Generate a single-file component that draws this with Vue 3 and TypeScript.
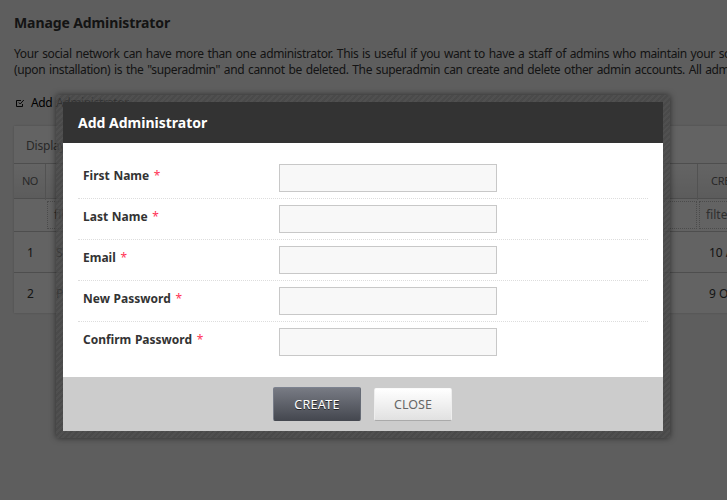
<script setup lang="ts">
interface Field {
  id: string
  label: string
  type: string
}

interface AdminRow {
  no: number
  name: string
  created: string
}

const fields: Field[] = [
  { id: 'first-name', label: 'First Name', type: 'text' },
  { id: 'last-name', label: 'Last Name', type: 'text' },
  { id: 'email', label: 'Email', type: 'text' },
  { id: 'new-password', label: 'New Password', type: 'password' },
  { id: 'confirm-password', label: 'Confirm Password', type: 'password' },
]

const rows: AdminRow[] = [
  { no: 1, name: 'S', created: '10 A' },
  { no: 2, name: 'P', created: '9 O' },
]
</script>

<template>
  <div class="screen">
    <main class="page">
      <h1>Manage Administrator</h1>
      <div class="intro">
        <p>Your social network can have more than one administrator. This is useful if you want to have a staff of admins who maintain your so</p>
        <p>(upon installation) is the "superadmin" and cannot be deleted. The superadmin can create and delete other admin accounts. All adm</p>
      </div>
      <a class="add-link">
        <svg width="9" height="9" viewBox="0 0 9 9" aria-hidden="true">
          <path d="M5 1.5H.5v6h6V5M2.8 3.5l1.4 1.5L7.8 1" />
        </svg>
        <span>Add Administrator</span>
      </a>
      <section class="grid">
        <div class="summary">Display</div>
        <div class="row head">
          <div class="cell no">NO</div>
          <div class="cell name"></div>
          <div class="cell created">CRE</div>
        </div>
        <div class="row filters">
          <div class="cell no"></div>
          <div class="cell name"><span class="filter">filter</span></div>
          <div class="cell created"><span class="filter">filter</span></div>
        </div>
        <div v-for="row in rows" :key="row.no" class="row">
          <div class="cell no">{{ row.no }}</div>
          <div class="cell name">{{ row.name }}</div>
          <div class="cell created">{{ row.created }}</div>
        </div>
      </section>
    </main>
    <div class="overlay">
      <div class="frame">
        <form class="dialog" @submit.prevent>
          <header>Add Administrator</header>
          <div class="fields">
            <div v-for="field in fields" :key="field.id" class="field">
              <label :for="field.id">{{ field.label }} <span class="required">*</span></label>
              <input :id="field.id" :type="field.type" />
            </div>
          </div>
          <footer>
            <button class="create" type="submit">CREATE</button>
            <button class="close" type="button">CLOSE</button>
          </footer>
        </form>
      </div>
    </div>
  </div>
</template>

<style>
body {
  overflow: hidden;
}
</style>

<style scoped>
* {
  box-sizing: border-box;
}

.screen {
  position: relative;
  width: 727px;
  height: 500px;
  overflow: hidden;
  background: #ebebeb;
  color: #333;
  font: 12px/16px Tahoma, "Noto Sans", sans-serif;
}

.page {
  padding: 14px 0 0 14px;
}

h1 {
  margin: 0;
  font-size: 14px;
  line-height: 18px;
  letter-spacing: -0.1px;
}

.intro {
  margin-top: 14px;
}

.intro p {
  margin: 0;
  white-space: nowrap;
  letter-spacing: -0.36px;
  word-spacing: 1px;
}

.add-link {
  display: flex;
  align-items: center;
  gap: 6px;
  margin: 17px 0 0 2px;
  color: #000;
  letter-spacing: -0.4px;
  word-spacing: 1px;
}

.add-link svg {
  fill: none;
  stroke: #111;
}

.grid {
  width: 860px;
  margin-top: 15px;
  background: #f8f8f8;
  box-shadow: 0 0 2px #bbb;
}

.summary {
  height: 37px;
  padding: 12px;
  color: #666;
  letter-spacing: -0.2px;
}

.row {
  display: grid;
  grid-template-columns: 32px 652px 1fr;
  height: 41px;
  border-top: 1px solid #c4c4c4;
}

.cell {
  padding: 13px 10px 11px;
  white-space: nowrap;
}

.cell.no {
  padding-inline: 1px 0;
  text-align: center;
}

.cell.created {
  padding-left: 11px;
}

.head {
  height: 35px;
  background: linear-gradient(#fafafa, #e6e6e6);
  color: #666;
  font-size: 11px;
  letter-spacing: -0.6px;
}

.head .cell {
  padding-top: 9px;
  border-right: 1px solid #ccc;
}

.head .cell.created {
  padding-left: 13px;
  letter-spacing: -0.3px;
}

.filters {
  height: 33px;
}

.filters .cell {
  padding: 2px 1px;
}

.filter {
  display: block;
  height: 28px;
  padding: 5px 6px;
  border: 1px dotted #bbb;
  color: #777;
}

.overlay {
  position: absolute;
  inset: 0;
  display: flex;
  align-items: flex-start;
  padding: 95px 0 0 56px;
  background: rgb(0 0 0 / 60%);
}

.frame {
  width: 614px;
  height: 343px;
  padding: 7px;
  border-radius: 3px;
  background: repeating-linear-gradient(135deg, rgb(67 67 67 / 75%) 0 2px, rgb(75 75 75 / 75%) 2px 4px);
  box-shadow: 0 0 6px rgb(0 0 0 / 55%);
}

.dialog {
  height: 329px;
  background: #fff;
}

header {
  height: 41px;
  padding: 12px 15px;
  background: #333;
  color: #fff;
  font-size: 14px;
  font-weight: 700;
  line-height: 18px;
}

.fields {
  height: 234px;
  padding: 15px 15px 0;
}

.field {
  display: grid;
  grid-template-columns: 196px 218px;
  height: 41px;
  padding: 6px 5px;
  border-bottom: 1px dotted #ddd;
}

.field:last-child {
  border-bottom: 0;
}

label {
  padding-top: 4px;
  font-weight: 700;
  word-spacing: 0.5px;
}

.required {
  margin-left: 1px;
  color: #f35;
  font-size: 12px;
  font-weight: 400;
}

input {
  width: 218px;
  height: 28px;
  border: 1px solid #c8c8c8;
  background: #f8f8f8;
}

footer {
  display: flex;
  gap: 13px;
  height: 54px;
  padding: 10px 0 0 210px;
  background: #ccc;
}

button {
  height: 34px;
  padding: 1px 0 0;
  border: 1px solid;
  border-radius: 2px;
  font: 12.5px/16px Tahoma, "Noto Sans", sans-serif;
}

.create {
  width: 88px;
  border-color: #7c828f #666b75 #454850 #777c88;
  background: linear-gradient(#787b84, #454850);
  color: #fff;
  letter-spacing: 0.3px;
  text-shadow: 0 1px #222;
}

.close {
  width: 78px;
  height: 33px;
  margin-top: 1px;
  padding: 0;
  border-color: #fafafa #eee #aaa;
  background: linear-gradient(#fff, #e1e1e1);
  color: #666;
}
</style>
